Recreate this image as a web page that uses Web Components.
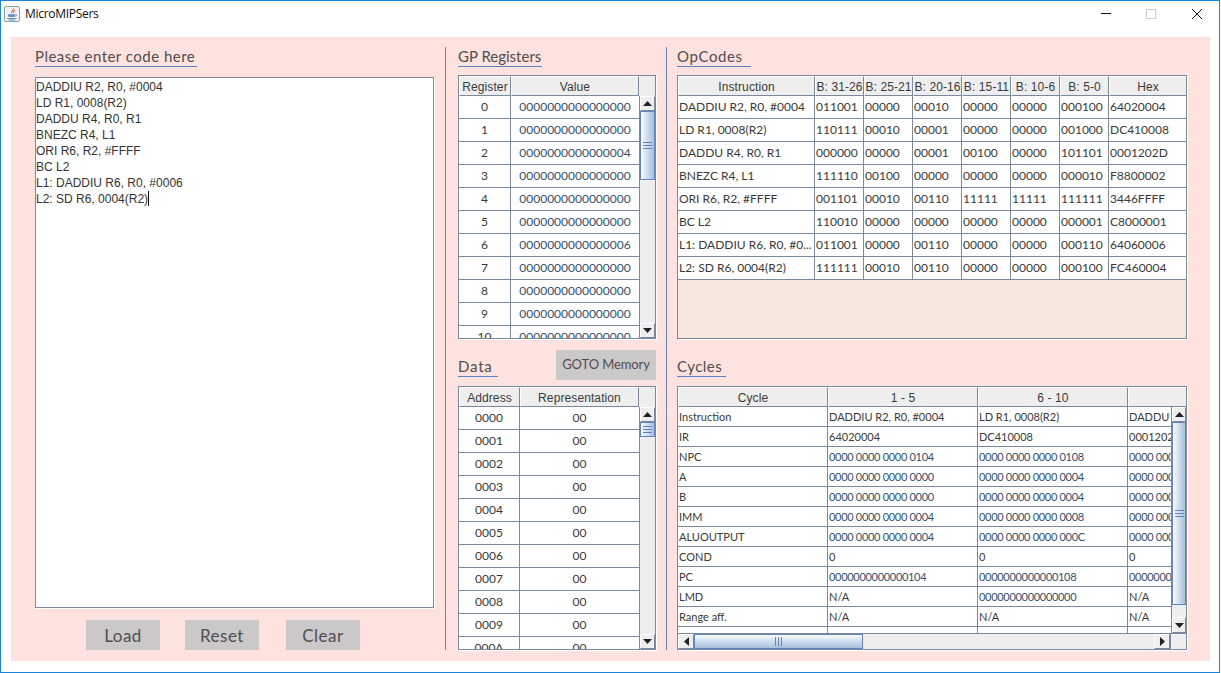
<!DOCTYPE html>
<html>
<head>
<meta charset="utf-8">
<title>MicroMIPSers</title>
<style>
html, body { margin: 0; padding: 0; background: #fff; }
</style>
</head>
<body>
<app-window>
    <title-bar>MicroMIPSers</title-bar>
    <main-panel>
        <code-pane slot="left"></code-pane>
        <registers-pane slot="middle"></registers-pane>
        <opcodes-pane slot="right"></opcodes-pane>
    </main-panel>
</app-window>

<script>
const GOTHIC = "Lato, 'Open Sans', sans-serif";
const ARIAL = "'Liberation Sans', Arial, sans-serif";

const CODE = [
    'DADDIU R2, R0, #0004',
    'LD R1, 0008(R2)',
    'DADDU R4, R0, R1',
    'BNEZC R4, L1',
    'ORI R6, R2, #FFFF',
    'BC L2',
    'L1: DADDIU R6, R0, #0006',
    'L2: SD R6, 0004(R2)'
];

const registerValues = ['0', '0', '4', '0', '0', '0', '6', '0', '0', '0', '0'];

const TABLES = {
    registers: {
        widths: [52, 128],
        head: ['Register', 'Value'],
        align: 'center',
        rows: registerValues.map((v, i) => [String(i), '000000000000000' + v]),
        vscroll: { width: 16, thumbStart: 0, thumbSize: 69, downHeight: 15 }
    },
    data: {
        widths: [61, 119],
        head: ['Address', 'Representation'],
        align: 'center',
        rows: ['0000', '0001', '0002', '0003', '0004', '0005', '0006', '0007', '0008', '0009', '000A'].map(a => [a, '00']),
        vscroll: { width: 16, thumbStart: 0, thumbSize: 15, downHeight: 15 }
    },
    opcodes: {
        widths: [137, 49, 49, 49, 49, 49, 49, 78],
        head: ['Instruction', 'B: 31-26', 'B: 25-21', 'B: 20-16', 'B: 15-11', 'B: 10-6', 'B: 5-0', 'Hex'],
        align: 'left',
        fill: '#f6e5dd',
        rows: [
            ['DADDIU R2, R0, #0004', '011001', '00000', '00010', '00000', '00000', '000100', '64020004'],
            ['LD R1, 0008(R2)', '110111', '00010', '00001', '00000', '00000', '001000', 'DC410008'],
            ['DADDU R4, R0, R1', '000000', '00000', '00001', '00100', '00000', '101101', '0001202D'],
            ['BNEZC R4, L1', '111110', '00100', '00000', '00000', '00000', '000010', 'F8800002'],
            ['ORI R6, R2, #FFFF', '001101', '00010', '00110', '11111', '11111', '111111', '3446FFFF'],
            ['BC L2', '110010', '00000', '00000', '00000', '00000', '000001', 'C8000001'],
            ['L1: DADDIU R6, R0, #0...', '011001', '00000', '00110', '00000', '00000', '000110', '64060006'],
            ['L2: SD R6, 0004(R2)', '111111', '00010', '00110', '00000', '00000', '000100', 'FC460004']
        ]
    },
    cycles: {
        widths: [150, 150, 150, 150],
        head: ['Cycle', '1 - 5', '6 - 10', ''],
        align: 'left',
        small: true,
        rowHeight: 20,
        rows: [
            ['Instruction', 'DADDIU R2, R0, #0004', 'LD R1, 0008(R2)', 'DADDU R4, R0, R1'],
            ['IR', '64020004', 'DC410008', '0001202D'],
            ['NPC', '0000 0000 0000 0104', '0000 0000 0000 0108', '0000 0000 0000 010C'],
            ['A', '0000 0000 0000 0000', '0000 0000 0000 0004', '0000 0000 0000 0000'],
            ['B', '0000 0000 0000 0000', '0000 0000 0000 0004', '0000 0000 0000 0000'],
            ['IMM', '0000 0000 0000 0004', '0000 0000 0000 0008', '0000 0000 0000 0000'],
            ['ALUOUTPUT', '0000 0000 0000 0004', '0000 0000 0000 000C', '0000 0000 0000 0000'],
            ['COND', '0', '0', '0'],
            ['PC', '0000000000000104', '0000000000000108', '000000000000010C'],
            ['LMD', 'N/A', '0000000000000000', 'N/A'],
            ['Range aff.', 'N/A', 'N/A', 'N/A'],
            ['', '', '', '']
        ],
        vscroll: { width: 15, thumbStart: 0, thumbSize: 183, downHeight: 16 },
        hscroll: { thumbSize: 169, corner: 16 }
    }
};

class AppWindow extends HTMLElement {
    constructor() {
        super();
        this.attachShadow({ mode: 'open' });
        this.shadowRoot.innerHTML = `
            <style>
                :host {
                    display: flex;
                    flex-direction: column;
                    box-sizing: border-box;
                    width: 1220px;
                    height: 673px;
                    border: 1px solid #1883d7;
                    background: #fff;
                    overflow: hidden;
                }
            </style>
            <slot></slot>
        `;
    }
}

class TitleBar extends HTMLElement {
    constructor() {
        super();
        this.attachShadow({ mode: 'open' });
        this.shadowRoot.innerHTML = `
            <style>
                :host {
                    display: flex;
                    align-items: center;
                    flex: none;
                    height: 26px;
                    padding: 0 0 0 3px;
                    font: 12px 'Open Sans', sans-serif;
                    letter-spacing: -.3px;
                    color: #111;
                }
                .app-icon { width: 16px; height: 16px; margin-right: 5px; flex: none; }
                .label { flex: 1; margin-top: -2px; }
                .controls { display: flex; align-items: center; margin-right: -1px; }
                .ctl { width: 46px; height: 26px; display: flex; align-items: center; justify-content: center; }
                .ctl svg { display: block; }
                .ctl.min { box-sizing: border-box; padding-left: 2px; }
            </style>
            <svg class="app-icon" viewBox="0 0 16 16">
                <rect x="0.5" y="0.5" width="15" height="15" rx="1.500" fill="#eef2f6" stroke="#8fa0b4"/>
                <path d="M9.500 2.500c.8 1.500-2.500 2.500-1.800 4.500M11 4.200c-1.200.8-2 1.500-1.500 2.800" fill="none" stroke="#e0672f" stroke-width="1.100"/>
                <path d="M4 8.200h7v1.300c0 1-1 1.600-2 1.600h-3c-1 0-2-.6-2-1.600z" fill="#6f8eb4"/>
                <path d="M11 8.700h1.200c1 0 .8 1.600-1.500 1.700" fill="none" stroke="#6f8eb4" stroke-width=".8"/>
                <path d="M3 12.500h9.500M4.500 14h6.500" stroke="#6f8eb4" stroke-width="1"/>
            </svg>
            <span class="label"><slot></slot></span>
            <div class="controls">
                <div class="ctl min"><svg width="10" height="10" viewBox="0 0 10 10"><path d="M0 4.500h10" stroke="#111" stroke-width="1"/></svg></div>
                <div class="ctl"><svg width="10" height="10" viewBox="0 0 10 10"><rect x=".5" y=".5" width="9" height="9" fill="none" stroke="#ccc"/></svg></div>
                <div class="ctl"><svg width="10" height="10" viewBox="0 0 10 10"><path d="M0 0l10 10M10 0L0 10" stroke="#111" stroke-width="1"/></svg></div>
            </div>
        `;
    }
}

class MainPanel extends HTMLElement {
    constructor() {
        super();
        this.attachShadow({ mode: 'open' });
        this.shadowRoot.innerHTML = `
            <style>
                :host {
                    display: flex;
                    flex: none;
                    box-sizing: border-box;
                    width: 1199px;
                    height: 624px;
                    margin: 10px 0 0 10px;
                    padding: 10px 0 11px 0;
                    background: #fee2df;
                }
                .col { display: block; box-sizing: border-box; }
                .left { width: 435px; padding-left: 24px; border-right: 1px solid #6d83ad; }
                .middle { width: 221px; padding-left: 12px; border-right: 1px solid #6d83ad; }
                .right { flex: 1; padding-left: 10px; }
            </style>
            <div class="col left"><slot name="left"></slot></div>
            <div class="col middle"><slot name="middle"></slot></div>
            <div class="col right"><slot name="right"></slot></div>
        `;
    }
}

class PanelTitle extends HTMLElement {
    constructor() {
        super();
        this.attachShadow({ mode: 'open' });
        this.shadowRoot.innerHTML = `
            <style>
                :host {
                    display: block;
                    box-sizing: border-box;
                    height: 20px;
                    font: 15px/19px ${GOTHIC};
                    letter-spacing: var(--ls, .3px);
                    color: #514d4f;
                    white-space: nowrap;
                    border-bottom: 1px solid #5c80c8;
                }
            </style>
            <slot></slot>
        `;
    }
}

class ActionButton extends HTMLElement {
    constructor() {
        super();
        this.attachShadow({ mode: 'open' });
        this.shadowRoot.innerHTML = `
            <style>
                :host {
                    display: flex;
                    align-items: center;
                    justify-content: center;
                    box-sizing: border-box;
                    height: 30px;
                    background: #cbc8c9;
                    color: #514d4f;
                    font: 17px ${GOTHIC};
                    letter-spacing: .5px;
                    white-space: nowrap;
                }
            </style>
            <slot></slot>
        `;
    }
}

class ScrollArrow extends HTMLElement {
    constructor() {
        super();
        this.attachShadow({ mode: 'open' });
        const dir = this.getAttribute('dir-to') || 'up';
        const points = {
            up: '0,5 4.500,0 9,5',
            down: '0,0 9,0 4.500,5',
            left: '5,0 5,9 0,4.500',
            right: '0,0 5,4.500 0,9'
        }[dir];
        const vertical = dir === 'up' || dir === 'down';
        const w = vertical ? 9 : 5;
        const h = vertical ? 5 : 9;
        this.shadowRoot.innerHTML = `
            <style>
                :host {
                    display: flex;
                    align-items: center;
                    justify-content: center;
                    box-sizing: border-box;
                    flex: none;
                    background: #eeeeee;
                    border-top: 1px solid #fff;
                    border-left: 1px solid #fff;
                    border-right: 1px solid #7a8a9c;
                    border-bottom: 1px solid #7a8a9c;
                }
                svg { display: block; }
            </style>
            <svg width="${w}" height="${h}" viewBox="0 0 ${w} ${h}"><polygon points="${points}" fill="#222"/></svg>
        `;
    }
}

class VScrollBar extends HTMLElement {
    constructor() {
        super();
        this.attachShadow({ mode: 'open' });
    }

    connectedCallback() {
        const size = +this.getAttribute('size');
        const start = +this.getAttribute('thumb-start');
        const down = +this.getAttribute('down-height');
        this.shadowRoot.innerHTML = `
            <style>
                :host {
                    display: flex;
                    flex-direction: column;
                    box-sizing: border-box;
                    flex: none;
                    height: 100%;
                    width: ${this.getAttribute('width')}px;
                    background: #eeeeee;
                    border-left: 1px solid #7a8a9c;
                }
                .up { height: 15px; }
                .down { height: ${down}px; }
                .track { flex: 1; min-height: 0; }
                .thumb {
                    box-sizing: border-box;
                    height: ${size}px;
                    margin-top: ${start}px;
                    display: flex;
                    align-items: center;
                    justify-content: center;
                    background: linear-gradient(to right, #fbfcfe, #c9d9ec 55%, #a9c1dd);
                    border: 1px solid #6382bf;
                }
                .grip { width: 9px; height: 5px; border-top: 1px solid #6382bf; border-bottom: 1px solid #6382bf; }
                .grip::after { content: ""; display: block; height: 1px; margin-top: 2px; background: #6382bf; }
            </style>
            <scroll-arrow class="up" dir-to="up"></scroll-arrow>
            <div class="track"><div class="thumb"><div class="grip"></div></div></div>
            <scroll-arrow class="down" dir-to="down"></scroll-arrow>
        `;
    }
}

class HScrollBar extends HTMLElement {
    constructor() {
        super();
        this.attachShadow({ mode: 'open' });
    }

    connectedCallback() {
        const size = +this.getAttribute('size');
        const corner = +this.getAttribute('corner');
        this.shadowRoot.innerHTML = `
            <style>
                :host {
                    display: flex;
                    box-sizing: border-box;
                    flex: none;
                    height: 16px;
                    background: #eeeeee;
                    border-top: 1px solid #7a8a9c;
                }
                scroll-arrow { width: 16px; }
                .track { flex: 1; min-width: 0; }
                .thumb {
                    box-sizing: border-box;
                    width: ${size}px;
                    height: 100%;
                    display: flex;
                    align-items: center;
                    justify-content: center;
                    background: linear-gradient(to bottom, #fbfcfe, #c9d9ec 55%, #a9c1dd);
                    border: 1px solid #6382bf;
                }
                .grip { width: 5px; height: 9px; border-left: 1px solid #6382bf; border-right: 1px solid #6382bf; display: flex; justify-content: center; }
                .grip::after { content: ""; display: block; width: 1px; background: #6382bf; }
                .corner { width: ${corner}px; flex: none; background: #eeeeee; border-left: 1px solid #7a8a9c; box-sizing: border-box; }
            </style>
            <scroll-arrow dir-to="left"></scroll-arrow>
            <div class="track"><div class="thumb"><div class="grip"></div></div></div>
            <scroll-arrow dir-to="right"></scroll-arrow>
            <div class="corner"></div>
        `;
    }
}

class DataTable extends HTMLElement {
    constructor() {
        super();
        this.attachShadow({ mode: 'open' });
    }

    getStyles(t) {
        const rowHeight = t.rowHeight || 23;
        const tpl = t.widths.map(w => w + 'px').join(' ');
        return `
            <style>
                :host {
                    display: flex;
                    flex-direction: column;
                    box-sizing: border-box;
                    border: 1px solid #7a8a9c;
                    box-shadow: 1px 1px 0 #fff;
                    background: #eeeeee;
                    color: #3a3a3a;
                    overflow: hidden;
                }
                .head {
                    display: flex;
                    flex: none;
                    height: 20px;
                    background: #eeeeee;
                }
                .head-row { display: grid; grid-template-columns: ${tpl}; }
                .th {
                    box-sizing: border-box;
                    height: 20px;
                    font: 12px/20px ${ARIAL};
                    letter-spacing: .1px;
                    text-align: center;
                    white-space: nowrap;
                    overflow: hidden;
                    background: #eeeeee;
                    border-left: 1px solid #fff;
                    border-top: 1px solid #fff;
                    border-right: 1px solid #7a8a9c;
                    border-bottom: 1px solid #7a8a9c;
                }
                .main { display: flex; flex: 1; min-height: 0; }
                .body { flex: 1; min-width: 0; overflow: hidden; background: ${t.fill || '#fff'}; }
                .row { display: grid; grid-template-columns: ${tpl}; }
                .td {
                    box-sizing: border-box;
                    height: ${rowHeight}px;
                    padding: 0 1px;
                    background: #fff;
                    font: ${t.small ? 11 : 12}px/${rowHeight - 1}px ${GOTHIC};
                    text-align: ${t.align};
                    white-space: nowrap;
                    overflow: hidden;
                    border-right: 1px solid #7a8a9c;
                    border-bottom: 1px solid #7a8a9c;
                }
                .td.num { color: #34506e; }
                .td.tight { letter-spacing: -.3px; }
                .row .td:last-child { ${t.small ? '' : 'border-right: 0;'} }
            </style>
        `;
    }

    cellClass(t, text) {
        // long runs of digits read blue in the original, and are narrower in the cycles grid
        if (!/^[0-9A-F ]{16,}$/.test(text)) return 'td';
        return t.small ? 'td num tight' : 'td num';
    }

    connectedCallback() {
        const t = TABLES[this.getAttribute('source')];
        const head = t.head.map(h => `<div class="th">${h}</div>`).join('');
        const rows = t.rows.map(r =>
            `<div class="row">${r.map(c => `<div class="${this.cellClass(t, c)}">${c}</div>`).join('')}</div>`
        ).join('');
        const v = t.vscroll;
        const h = t.hscroll;
        this.shadowRoot.innerHTML = `
            ${this.getStyles(t)}
            <div class="head"><div class="head-row">${head}</div></div>
            <div class="main">
                <div class="body">${rows}</div>
                ${v ? `<v-scroll-bar width="${v.width}" size="${v.thumbSize}" thumb-start="${v.thumbStart}" down-height="${v.downHeight}"></v-scroll-bar>` : ''}
            </div>
            ${h ? `<h-scroll-bar size="${h.thumbSize}" corner="${h.corner}"></h-scroll-bar>` : ''}
        `;
    }
}

class CodeEditor extends HTMLElement {
    constructor() {
        super();
        this.attachShadow({ mode: 'open' });
        const lines = CODE.map((l, i) =>
            `<div class="line">${l}${i === CODE.length - 1 ? '<span class="caret"></span>' : ''}</div>`
        ).join('');
        this.shadowRoot.innerHTML = `
            <style>
                :host {
                    display: block;
                    box-sizing: border-box;
                    background: #fff;
                    border: 1px solid #7a8a9c;
                    box-shadow: 1px 1px 0 #fff;
                    padding: 1px 0 0 0;
                    font: 12px/16px ${ARIAL};
                    color: #333;
                }
                .line { height: 16px; white-space: pre; }
                .caret { display: inline-block; width: 1px; height: 15px; background: #111; vertical-align: -3px; }
            </style>
            ${lines}
        `;
    }
}

class CodePane extends HTMLElement {
    constructor() {
        super();
        this.attachShadow({ mode: 'open' });
        this.shadowRoot.innerHTML = `
            <style>
                :host { display: block; }
                panel-title { width: 162px; --ls: .48px; }
                code-editor { width: 399px; height: 531px; margin-top: 10px; }
                .buttons { display: flex; margin: 12px 0 0 51px; }
                action-button { width: 74px; }
                .b2 { margin-left: 25px; }
                .b3 { margin-left: 27px; }
            </style>
            <panel-title>Please enter code here</panel-title>
            <code-editor></code-editor>
            <div class="buttons">
                <action-button>Load</action-button>
                <action-button class="b2">Reset</action-button>
                <action-button class="b3">Clear</action-button>
            </div>
        `;
    }
}

class RegistersPane extends HTMLElement {
    constructor() {
        super();
        this.attachShadow({ mode: 'open' });
        this.shadowRoot.innerHTML = `
            <style>
                :host { display: block; }
                .gp-title { width: 84px; --ls: 0px; }
                data-table { width: 198px; height: 264px; }
                .gp { margin-top: 8px; }
                .data-head { display: flex; justify-content: space-between; align-items: flex-end; width: 198px; margin-top: 11px; height: 30px; }
                .data-title { width: 40px; margin-bottom: 3px; --ls: .8px; }
                .goto { width: 100px; font-size: 13px; letter-spacing: -.1px; padding-bottom: 2px; }
                .data { margin-top: 6px; }
            </style>
            <panel-title class="gp-title">GP Registers</panel-title>
            <data-table class="gp" source="registers"></data-table>
            <div class="data-head">
                <panel-title class="data-title">Data</panel-title>
                <action-button class="goto">GOTO Memory</action-button>
            </div>
            <data-table class="data" source="data"></data-table>
        `;
    }
}

class OpcodesPane extends HTMLElement {
    constructor() {
        super();
        this.attachShadow({ mode: 'open' });
        this.shadowRoot.innerHTML = `
            <style>
                :host { display: block; }
                .op-title { width: 74px; --ls: .6px; }
                data-table { width: 510px; height: 264px; }
                .op { margin-top: 8px; }
                .cy-title { width: 49px; margin-top: 18px; --ls: .45px; }
                .cy { margin-top: 9px; }
            </style>
            <panel-title class="op-title">OpCodes</panel-title>
            <data-table class="op" source="opcodes"></data-table>
            <panel-title class="cy-title">Cycles</panel-title>
            <data-table class="cy" source="cycles"></data-table>
        `;
    }
}

customElements.define('scroll-arrow', ScrollArrow);
customElements.define('v-scroll-bar', VScrollBar);
customElements.define('h-scroll-bar', HScrollBar);
customElements.define('panel-title', PanelTitle);
customElements.define('action-button', ActionButton);
customElements.define('data-table', DataTable);
customElements.define('code-editor', CodeEditor);
customElements.define('code-pane', CodePane);
customElements.define('registers-pane', RegistersPane);
customElements.define('opcodes-pane', OpcodesPane);
customElements.define('main-panel', MainPanel);
customElements.define('title-bar', TitleBar);
customElements.define('app-window', AppWindow);
</script>
</body>
</html>
